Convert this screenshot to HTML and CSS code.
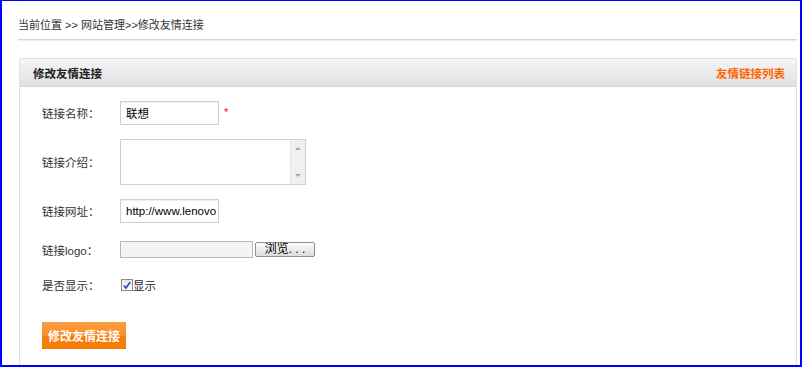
FILE: index.html
```html
<!DOCTYPE html>
<html lang="zh-CN">
<head>
  <meta charset="UTF-8">
  <title>修改友情连接</title>
  <link rel="stylesheet" href="styles.css">
</head>
<body>

<div class="frame">
  <div class="crumb">当前位置 &gt;&gt; 网站管理&gt;&gt;修改友情连接</div>

  <div class="panel">
    <div class="panel-head">
      <span class="panel-title">修改友情连接</span>
      <a class="panel-link" href="#">友情链接列表</a>
    </div>

    <form class="panel-body">
      <div class="row row-name">
        <label>链接名称：</label>
        <input class="txt" type="text" value="联想">
        <span class="req">*</span>
      </div>
      <div class="row row-intro">
        <label>链接介绍：</label>
        <div class="area">
          <textarea></textarea>
          <div class="scroll"><span class="arr up"></span><span class="arr down"></span></div>
        </div>
      </div>
      <div class="row row-url">
        <label>链接网址：</label>
        <input class="txt" type="text" value="http://www.lenovo.com">
      </div>
      <div class="row row-logo">
        <label>链接logo：</label>
        <input class="file-path" type="text" readonly>
        <button class="browse" type="button">浏览. . .</button>
      </div>
      <div class="row row-show">
        <label>是否显示：</label>
        <span class="check">
          <svg width="11" height="11" viewBox="0 0 11 11"><path d="M2 5.5 L4.3 8.3 L9 1.8" fill="none" stroke="#2349b8" stroke-width="1.8"/></svg>
        </span>
        <span class="check-text">显示</span>
      </div>
      <button class="submit" type="submit">修改友情连接</button>
    </form>
  </div>
</div>

</body>
</html>
```

FILE: styles.css
```css
body { margin: 0; font: 11.5px "Liberation Sans", "Noto Sans CJK SC", sans-serif; color: #333; background: #fff; }
.frame { box-sizing: border-box; width: 802px; height: 367px; border: 2px solid #0000ff; border-top-width: 1px; overflow: hidden; }
.crumb { margin: 0 3px 0 16px; padding: 16px 0 6px; font-size: 11px; line-height: 16px; border-bottom: 1px solid #d8d8d8; box-shadow: 0 1px 1px #eee; }
.panel { margin: 18px 3px 0 17px; border: 1px solid #e3e3e3; height: 400px; }
.panel-head { display: flex; justify-content: space-between; align-items: center; height: 27px; padding: 0 11px 0 13px; background: linear-gradient(#f5f5f5, #e0e0e0); border-bottom: 1px solid #d6d6d6; }
.panel-title { font-weight: bold; color: #222; }
.panel-link { font-weight: bold; color: #f60; text-decoration: none; }
.panel-body { padding: 14px 0 0 22px; }
.row { display: flex; align-items: center; }
.row label { width: 78px; flex: none; }
.row-name { height: 24px; margin-bottom: 14px; }
.row-intro { height: 46px; margin-bottom: 14px; }
.row-url { height: 24px; margin-bottom: 18px; }
.row-logo { height: 17px; margin-bottom: 17px; }
.row-show { height: 20px; margin-bottom: 27px; }
.txt { box-sizing: border-box; width: 99px; height: 24px; margin: 0; padding: 0 1px 0 5px; border: 1px solid #d0d0d0; box-shadow: inset 0 1px 1px #eee; font: 11.5px "Liberation Sans", "Noto Sans CJK SC", sans-serif; color: #000; }
.req { color: #f00; margin: -3px 0 0 5px; font-size: 11px; }
.area { box-sizing: border-box; display: flex; width: 186px; height: 46px; border: 1px solid #cfcfcf; }
.area textarea { flex: 1; border: 0; margin: 0; padding: 2px; resize: none; outline: none; }
.scroll { position: relative; width: 14px; background: #f0f0f0; border-left: 1px solid #e4e4e4; }
.arr { position: absolute; left: 4px; width: 0; height: 0; border-left: 3px solid transparent; border-right: 3px solid transparent; }
.arr.up { top: 7px; border-bottom: 3px solid #a8a8a8; }
.arr.down { bottom: 7px; border-top: 3px solid #a8a8a8; }
.file-path { box-sizing: border-box; width: 133px; height: 17px; margin: 0 2px 0 0; border: 1px solid #b8b8b8; background: #f4f4f4; }
.browse { box-sizing: border-box; width: 60px; height: 15px; padding: 0; border: 1px solid #8e8e8e; border-radius: 2px; background: linear-gradient(#fbfbfb, #dcdcdc); font: 12px/13px "Liberation Sans", "Noto Sans CJK SC", sans-serif; color: #000; }
.check { box-sizing: border-box; display: flex; align-items: center; justify-content: center; width: 12px; height: 12px; margin-left: 1px; border: 1px solid #8a8a8a; background: linear-gradient(#e6e6e6, #fff); }
.check-text { color: #222; }
.submit { width: 84px; height: 27px; padding: 0; border: 0; background: linear-gradient(#fb9e42 0, #f98d28 50%, #f67e0c 51%, #f57c08 100%); color: #fff; font: bold 12px "Noto Sans CJK SC", sans-serif; cursor: pointer; }
```
